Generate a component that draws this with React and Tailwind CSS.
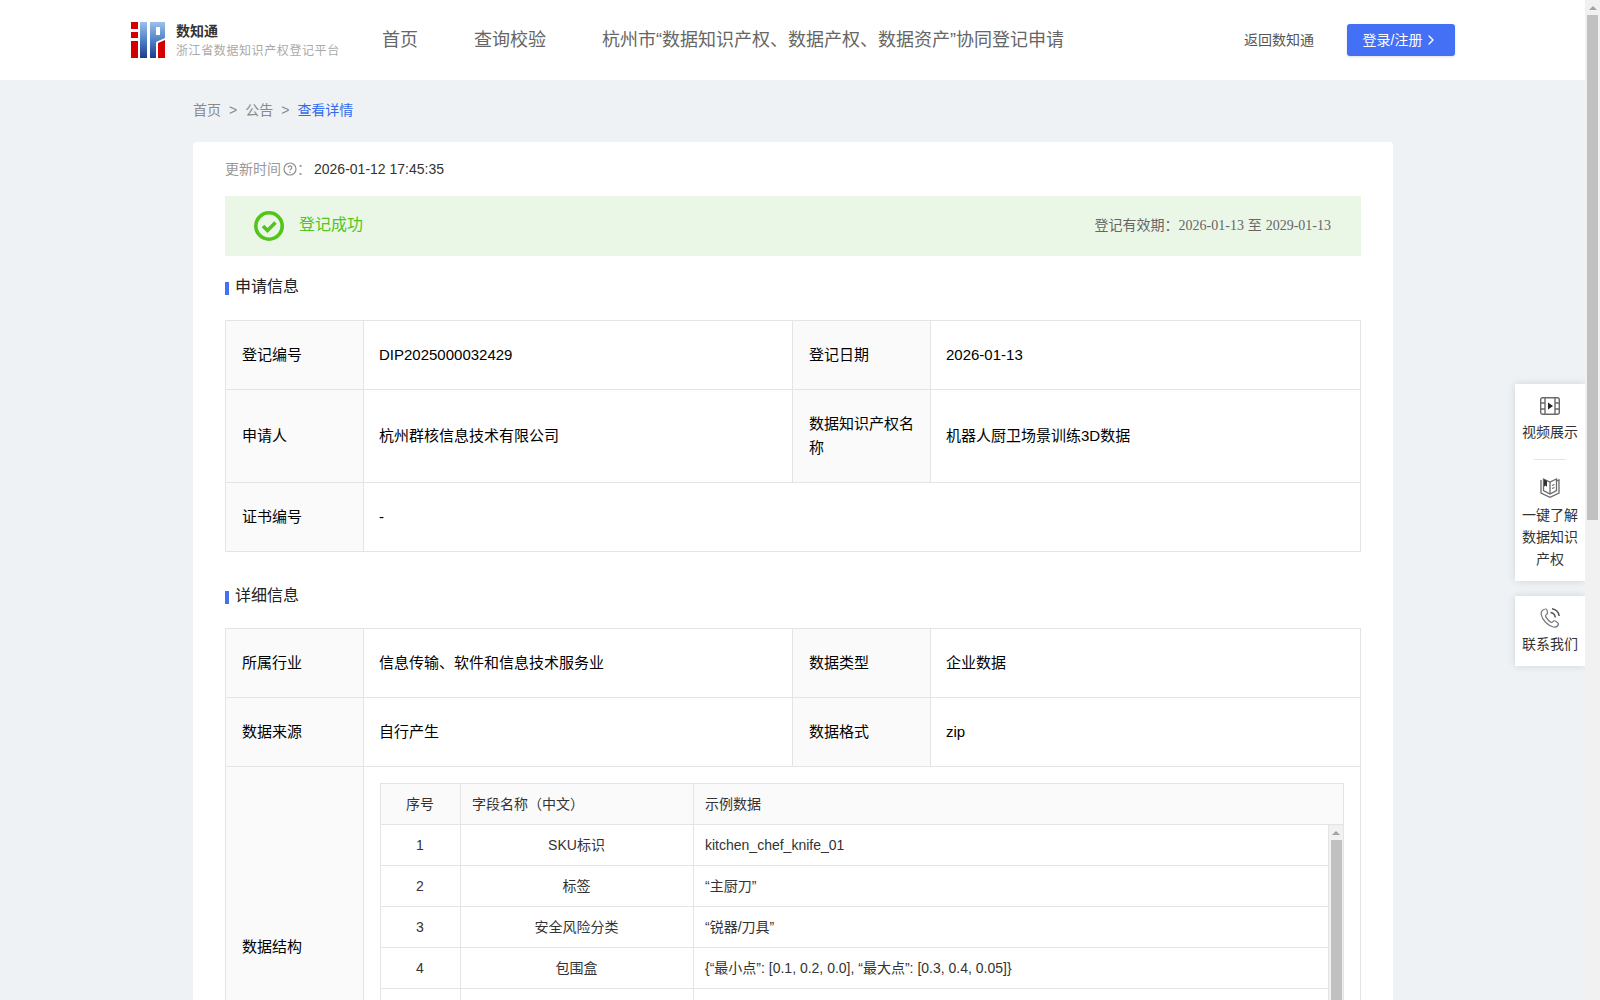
import React from 'react';
import { ChevronRight } from 'lucide-react';

const font = 'font-["Liberation_Sans","Noto_Sans_CJK_SC",sans-serif]';

const thCell = 'bg-[#fafafa] border-[#e4e4e4] px-4 flex items-center text-[15px] leading-[24px] text-black';
const tdCell = 'border-[#e4e4e4] pl-[15px] pr-4 flex items-center text-[15px] leading-[24px] text-black';

const fields = [
  ['1', 'SKU标识', 'kitchen_chef_knife_01'],
  ['2', '标签', '“主厨刀”'],
  ['3', '安全风险分类', '“锐器/刀具”'],
  ['4', '包围盒', '{“最小点”: [0.1, 0.2, 0.0], “最大点”: [0.3, 0.4, 0.05]}'],
  ['', '', ''],
];

const Logo = () => (
  <svg width="35" height="36" viewBox="0 0 35 36">
    <defs>
      <linearGradient id="lg" x1="0" y1="0" x2="0" y2="1">
        <stop offset="0" stopColor="#9cc0ea" />
        <stop offset="0.5" stopColor="#4f82c8" />
        <stop offset="1" stopColor="#1f3b8a" />
      </linearGradient>
    </defs>
    <rect x="0" y="0" width="7" height="7" fill="#d40000" />
    <rect x="0" y="10" width="7" height="6" fill="#d40000" />
    <rect x="0" y="19" width="7" height="17" fill="#d40000" />
    <rect x="9" y="0" width="7" height="36" fill="url(#lg)" />
    <path d="M19 0h15v16l-9 4v16h-6z" fill="url(#lg)" />
    <rect x="25" y="5" width="4" height="8" fill="#fff" />
    <path d="M27 21l7-3v18h-7z" fill="#d40000" />
  </svg>
);

const Title = ({ children }) => (
  <div className="flex items-center text-[16px] leading-[24px] text-[#222]">
    <span className="w-1 h-[13px] bg-[#4470f5] mr-[6px] mt-[3px]" />
    {children}
  </div>
);

function ScrollBar({ className, thumb }) {
  return (
    <div className={`flex flex-col items-center bg-[#f1f1f1] ${className}`}>
      <div className="h-[15px] w-full flex items-center justify-center">
        <span className="border-x-[4px] border-x-transparent border-b-[4px] border-b-[#a3a3a3]" />
      </div>
      <div className={`w-[11px] bg-[#c1c1c1] ${thumb}`} />
    </div>
  );
}

export default function App() {
  return (
    <div className={`h-screen overflow-hidden flex bg-[#eef2f5] ${font}`}>
      <div className="flex-1 min-w-0 h-full overflow-hidden relative">
        <header className="h-[80px] bg-white flex items-center pl-[131px] pr-[130px]">
          <Logo />
          <div className="ml-[10px] w-[205px] pt-[1px]">
            <div className="text-[14px] leading-[19px] font-bold text-[#333]">数知通</div>
            <div className="text-[12px] leading-[18px] text-[#aaa] mt-[1px] tracking-[0.6px]">浙江省数据知识产权登记平台</div>
          </div>
          <nav className="flex text-[18px] text-[#666]">
            <span className="ml-[1px]">首页</span>
            <span className="ml-[20px] pl-[36px]">查询校验</span>
            <span className="ml-[20px] pl-[36px]">杭州市“数据知识产权、数据产权、数据资产”协同登记申请</span>
          </nav>
          <span className="ml-auto text-[14px] text-[#555]">返回数知通</span>
          <button className="ml-[33px] w-[108px] h-[32px] rounded-[3px] bg-[#4470f5] text-white text-[14px] leading-[30px] flex items-center justify-center shadow-sm">
            登录/注册
            <ChevronRight size={16} className="ml-[1px]" />
          </button>
        </header>

        <main className="w-[1200px] ml-[193px]">
          <div className="h-[62px] pb-[1px] flex items-center text-[14px] text-[#8a8a8a]">
            首页<span className="mx-[8px]">&gt;</span>公告<span className="mx-[8px]">&gt;</span>
            <span className="text-[#2f6bf0]">查看详情</span>
          </div>

          <div className="bg-white rounded-t-[4px] px-[32px] pt-[16px] h-[900px]">
            <div className="flex items-center text-[14px] leading-[22px]">
              <span className="text-[#999]">更新时间</span>
              <svg className="ml-[2px]" width="14" height="14" viewBox="0 0 14 14" fill="none" stroke="#8f8f8f" strokeWidth="1.2">
                <circle cx="7" cy="7" r="6" />
                <path d="M5.2 5.600a1.800 1.800 0 1 1 2.600 1.600c-.6.3-.8.6-.8 1.300" />
                <path d="M7 9.800v1.200" />
              </svg>
              <span className="text-[#999]">：</span>
              <span className="text-[#333] ml-[3px]">2026-01-12 17:45:35</span>
            </div>

            <div className="mt-[16px] h-[60px] bg-[#ebf7e6] flex items-center pl-[29px] pr-[30px]">
              <svg width="30" height="30" viewBox="0 0 30 30" fill="none">
                <circle cx="15" cy="15" r="13.200" stroke="#52c41a" strokeWidth="3.600" />
                <path d="M9 15l4.500 4.500 8-8" stroke="#52c41a" strokeWidth="3.600" />
              </svg>
              <span className="ml-[15px] text-[16px] text-[#52c41a] -mt-[2px]">登记成功</span>
              <span className="ml-auto text-[14px] text-[#666] -mt-[1px]">
                登记有效期：<span className='font-["Liberation_Serif",serif]'>2026-01-13</span> 至 <span className='font-["Liberation_Serif",serif]'>2029-01-13</span>
              </span>
            </div>

            <div className="mt-[19px]"><Title>申请信息</Title></div>

            <div className="mt-[21px] grid grid-cols-[138px_429px_138px_1fr] border-t border-l border-[#e4e4e4]">
              <div className={`${thCell} h-[69px] border-r border-b`}>登记编号</div>
              <div className={`${tdCell} border-r border-b`}>DIP2025000032429</div>
              <div className={`${thCell} border-r border-b`}>登记日期</div>
              <div className={`${tdCell} border-r border-b`}>2026-01-13</div>

              <div className={`${thCell} h-[93px] border-r border-b`}>申请人</div>
              <div className={`${tdCell} border-r border-b`}>杭州群核信息技术有限公司</div>
              <div className={`${thCell} border-r border-b`}>数据知识产权名称</div>
              <div className={`${tdCell} border-r border-b`}>机器人厨卫场景训练3D数据</div>

              <div className={`${thCell} h-[69px] border-r border-b`}>证书编号</div>
              <div className={`${tdCell} col-span-3 border-r border-b`}>-</div>
            </div>

            <div className="mt-[32px]"><Title>详细信息</Title></div>

            <div className="mt-[20px] grid grid-cols-[138px_429px_138px_1fr] border-t border-l border-[#e4e4e4]">
              <div className={`${thCell} h-[69px] border-r border-b`}>所属行业</div>
              <div className={`${tdCell} border-r border-b`}>信息传输、软件和信息技术服务业</div>
              <div className={`${thCell} border-r border-b`}>数据类型</div>
              <div className={`${tdCell} border-r border-b`}>企业数据</div>

              <div className={`${thCell} h-[69px] border-r border-b`}>数据来源</div>
              <div className={`${tdCell} border-r border-b`}>自行产生</div>
              <div className={`${thCell} border-r border-b`}>数据格式</div>
              <div className={`${tdCell} border-r border-b`}>zip</div>

              <div className={`${thCell} h-[360px] border-r border-b`}>数据结构</div>
              <div className="col-span-3 border-r border-[#e4e4e4] p-4 text-[14px] text-[#333]">
                <div className="border-t border-l border-r border-[#e4e4e4]">
                  <div className="grid grid-cols-[80px_233px_1fr] h-[41px] bg-[#fafafa] border-b border-[#e4e4e4]">
                    <div className="flex items-center justify-center border-r border-[#e4e4e4] pr-[1px]">序号</div>
                    <div className="flex items-center pl-[11px] border-r border-[#e4e4e4]">字段名称（中文）</div>
                    <div className="flex items-center pl-[11px]">示例数据</div>
                  </div>
                  <div className="flex">
                    <div className="flex-1 min-w-0">
                      {fields.map((f, i) => (
                        <div key={i} className="grid grid-cols-[80px_233px_1fr] h-[41px] border-b border-r border-[#e4e4e4]">
                          <div className="flex items-center justify-center border-r border-[#e4e4e4] pr-[1px]">{f[0]}</div>
                          <div className="flex items-center justify-center border-r border-[#e4e4e4] pr-[1px]">{f[1]}</div>
                          <div className="flex items-center pl-[11px]">{f[2]}</div>
                        </div>
                      ))}
                    </div>
                    <ScrollBar className="w-[14px]" thumb="h-[400px]" />
                  </div>
                </div>
              </div>
            </div>
          </div>
        </main>

        <div className="absolute right-0 top-[384px] w-[70px] h-[197px] bg-white shadow-[0_0_8px_rgba(0,0,0,0.12)] flex flex-col items-center text-[14px] leading-[22px] text-[#333]">
          <svg className="mt-[13px]" width="20" height="18" viewBox="0 0 20 18" fill="none" stroke="#6a6a6a" strokeWidth="1.400">
            <rect x="0.700" y="0.700" width="18.600" height="16.600" rx="2" />
            <path d="M5 1v16M15 1v16M1 6h4M1 12h4M15 6h4M15 12h4" />
            <path d="M8 5.500l5 3.500-5 3.500z" fill="#222" stroke="none" />
          </svg>
          <div className="mt-[6px]">视频展示</div>
          <div className="w-[32px] h-px bg-[#e4e4e4] mt-[16px]" />
          <svg className="mt-[18px]" width="20" height="20" viewBox="0 0 20 20" fill="none" stroke="#6a6a6a" strokeWidth="1.300">
            <path d="M1 2v13l9 4.300 9-4.300V2l-2.500.8" />
            <path d="M3.500 1l6.500 3 6.500-3v11.500L10 16 3.500 12.500z" />
            <path d="M10 4v12M12 7.500l2.500-1M12 10.500l2.500-1" />
            <path d="M4 1.500l3 1.300v6L5.500 7.500 4 8.500z" fill="#333" stroke="none" />
          </svg>
          <div className="mt-[6px] text-center w-[58px]">一键了解<br />数据知识<br />产权</div>
        </div>

        <div className="absolute right-0 top-[596px] w-[70px] h-[70px] bg-white shadow-[0_0_8px_rgba(0,0,0,0.12)] flex flex-col items-center text-[14px] leading-[22px] text-[#333]">
          <svg className="mt-[12px]" width="20" height="20" viewBox="0 0 20 20" fill="none" stroke="#777" strokeWidth="1.200">
            <path d="M6 1C3 1 .7 3.500 1.200 6.500 2 11.500 8 18 13.500 19c2.500.4 4.500-1 5-3 .2-1-3.500-3.500-4.500-3.200-1 .3-1.500 2-2.500 1.700-2-.7-5.500-4.500-6-6.500-.2-1 1.500-1.500 1.800-2.500C7.700 4.500 7 1 6 1z" />
            <path d="M10.500 4.500c2.500.3 4.500 2.500 4.800 5M12 .8c3.800.6 6.600 3.500 7.200 7.200" strokeWidth="1.500" stroke="#555" />
          </svg>
          <div className="mt-[5px]">联系我们</div>
        </div>
      </div>

      <ScrollBar className="w-[15px] h-full shrink-0" thumb="h-[505px]" />
    </div>
  );
}
